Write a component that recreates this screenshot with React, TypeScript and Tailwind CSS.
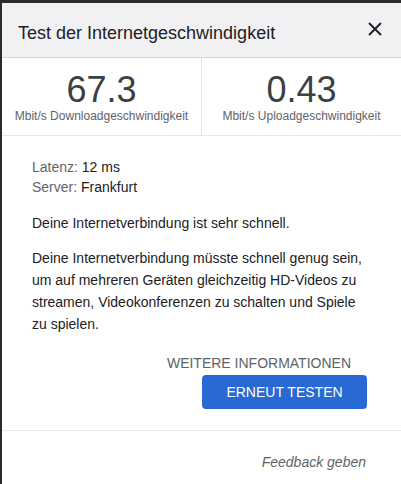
import React from "react";

const SpeedValue: React.FC<{ value: string; label: string; border?: boolean }> = ({
  value,
  label,
  border,
}) => (
  <div
    className={`flex-1 flex flex-col items-center pt-[13px] ${
      border ? "border-r border-[#e4e4e4]" : ""
    }`}
  >
    <div className="text-[36px] leading-[38px] text-[#3c4043]">{value}</div>
    <div className="text-[12px] leading-[16px] text-[#5f6368] mt-[-1px]">{label}</div>
  </div>
);

const App: React.FC = () => {
  return (
    <div
      className="w-[401px] h-[484px] bg-[#2a2a2a] pl-[2px] pt-[3px] overflow-hidden"
      style={{ fontFamily: '"Liberation Sans", Arial, sans-serif' }}
    >
      <div className="w-full h-full bg-white flex flex-col">
        <div className="h-[55px] shrink-0 bg-[#f1f1f3] border-b border-[#d6d6d8] flex items-center justify-between pl-[16px] pr-[19px]">
          <h1 className="text-[18px] text-[#202124] pt-[6px]">Test der Internetgeschwindigkeit</h1>
          <svg width="14" height="14" viewBox="0 0 14 14" className="mt-[-2px]">
            <path d="M1 1 L13 13 M13 1 L1 13" stroke="#202124" strokeWidth="1.9" />
          </svg>
        </div>

        <div className="flex h-[78px] shrink-0 border-b border-[#e8e8e8]">
          <SpeedValue value="67.3" label="Mbit/s Downloadgeschwindigkeit" border />
          <SpeedValue value="0.43" label="Mbit/s Uploadgeschwindigkeit" />
        </div>

        <div className="px-[30px] pt-[21px] text-[14px] text-[#202124]">
          <div className="leading-[20px]">
            <div>
              <span className="text-[#5f6368]">Latenz:</span> 12 ms
            </div>
            <div>
              <span className="text-[#5f6368]">Server:</span> Frankfurt
            </div>
          </div>
          <p className="mt-[15px] leading-[22px]">Deine Internetverbindung ist sehr schnell.</p>
          <p className="mt-[13px] leading-[22px]">
            Deine Internetverbindung müsste schnell genug sein, um auf mehreren Geräten gleichzeitig
            HD-Videos zu streamen, Videokonferenzen zu schalten und Spiele zu spielen.
          </p>
        </div>

        <div className="flex flex-col items-end pr-[34px] mt-[18px]">
          <button className="text-[14px] text-[#5f6368] pr-[16px] leading-[20px]">
            WEITERE INFORMATIONEN
          </button>
          <button className="mt-[2px] w-[165px] h-[34px] rounded-[4px] bg-[#2869d4] text-white text-[14px] font-medium">
            ERNEUT TESTEN
          </button>
        </div>

        <div className="mt-[21px] border-t border-[#e8e8e8] flex justify-end pr-[35px] pt-[21px]">
          <span className="italic text-[14px] leading-[20px] text-[#5f6368]">Feedback geben</span>
        </div>
      </div>
    </div>
  );
};

export default App;
